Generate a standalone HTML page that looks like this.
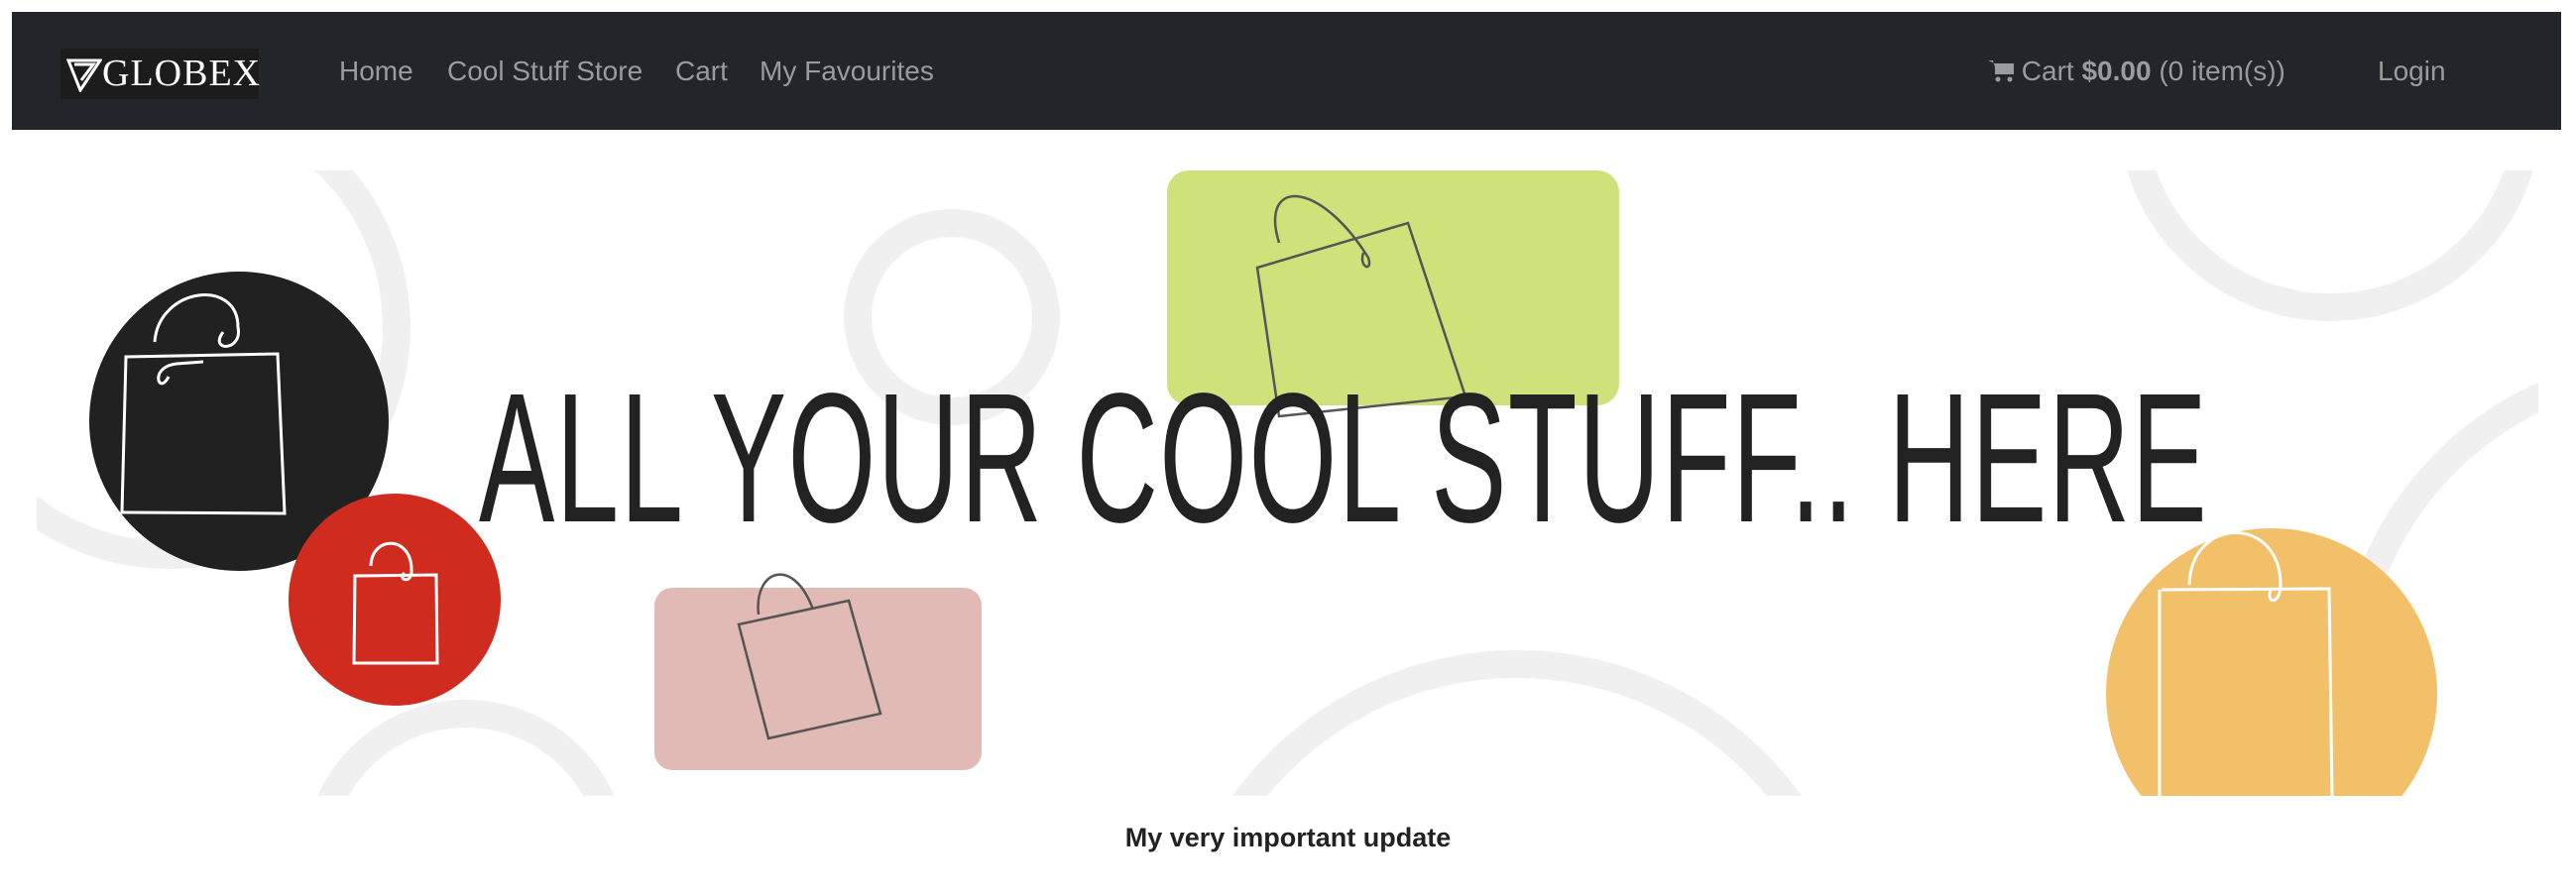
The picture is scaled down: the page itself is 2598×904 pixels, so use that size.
<!DOCTYPE html>
<html style="overflow:hidden;height:904px"><head><meta charset="utf-8"><style>
body{margin:0;width:2598px;height:904px;background:#fff;overflow:hidden;font-family:"Liberation Sans",Arial,sans-serif;position:relative}
.nav{position:absolute;left:12px;top:12px;width:2571px;height:119px;background:#222529}
.logo{position:absolute;left:49px;top:37px;width:200px;height:51px;background:#1c1c1c;color:#fff;font-family:"Liberation Serif",serif;font-size:38px;line-height:51px;letter-spacing:1px}
.nl{position:absolute;top:44px;color:#9a9b9d;font-size:28px;line-height:32px;white-space:nowrap}
.hero{position:absolute;left:37px;top:172px;width:2523px;height:631px;overflow:hidden}
.head{position:absolute;left:483px;top:370px;font-size:186px;line-height:186px;color:#222;white-space:nowrap;transform-origin:0 0;transform:scaleX(0.615);letter-spacing:2px}
.upd{position:absolute;left:0;width:2598px;top:830px;text-align:center;font-weight:bold;font-size:27px;color:#222}
</style></head><body>
<div class="nav">
 <div class="logo"><svg width="36" height="36" viewBox="0 0 36 36" style="position:absolute;left:6px;top:8px"><path d="M2 4 L34 4 L14 34 Z M8 8 L27 8 L15 24" fill="none" stroke="#fff" stroke-width="3"/></svg><span style="position:absolute;left:42px">GLOBEX</span></div>
 <div class="nl" style="left:330px">Home</div>
 <div class="nl" style="left:439px">Cool Stuff Store</div>
 <div class="nl" style="left:669px">Cart</div>
 <div class="nl" style="left:754px">My Favourites</div>
 <div class="nl" style="left:1993px"><svg width="26" height="24" viewBox="0 0 26 24" style="vertical-align:-2px"><path d="M0 2h5l4 14h14l3-11H7" fill="#9a9b9d"/><rect x="7" y="5" width="19" height="11" fill="#9a9b9d"/><circle cx="10" cy="21" r="2.5" fill="#9a9b9d"/><circle cx="22" cy="21" r="2.5" fill="#9a9b9d"/></svg> Cart <b>$0.00</b> (0 item(s))</div>
 <div class="nl" style="left:2386px">Login</div>
</div>
<div class="hero">
<svg width="2523" height="631" viewBox="37 172 2523 631" style="position:absolute;left:0;top:0">
 <g fill="none" stroke="#f0f0f0" stroke-width="28">
  <circle cx="960" cy="320" r="95"/>
  <circle cx="1530" cy="1010" r="340"/>
  <circle cx="470" cy="870" r="150"/>
  <circle cx="2350" cy="110" r="200"/>
  <circle cx="170" cy="330" r="230"/>
  <circle cx="2700" cy="700" r="330"/>
 </g>
 <circle cx="241" cy="425" r="151" fill="#212121"/>
 <circle cx="398" cy="605" r="107" fill="#cf2c1f"/>
 <rect x="1177" y="172" width="456" height="237" rx="22" fill="#cfe17a"/>
 <rect x="660" y="593" width="330" height="184" rx="18" fill="#e1b9b5"/>
 <circle cx="2291" cy="700" r="167" fill="#f3c06a"/>
 <g fill="none" stroke="#fff" stroke-width="3">
  <path d="M127 360 L280 357 L287 518 L123 517 Z M156 345 C160 290 240 280 240 330 C245 355 210 355 225 335 M205 365 L178 367 C150 370 160 400 170 380"/>
  <path d="M358 581 L440 580 L441 669 L357 669 Z M374 571 C375 540 415 540 415 575 C416 590 400 585 408 578"/>
  <path d="M2180 595 L2349 594 L2352 803 M2178 595 L2178 803 M2208 590 C2210 520 2300 520 2300 590 C2300 610 2285 610 2290 595"/>
 </g>
 <g fill="none" stroke="#555" stroke-width="2.5">
  <path d="M1268 270 L1420 225 L1478 400 L1290 420 Z M1290 245 C1270 180 1330 180 1380 260 C1385 275 1370 270 1375 255"/>
  <path d="M745 630 L856 606 L888 720 L775 745 Z M765 620 C760 575 800 560 820 615"/>
 </g>
</svg>
</div>
<div class="head">ALL YOUR COOL STUFF.. HERE</div>
<div class="upd">My very important update</div>
</body></html>
